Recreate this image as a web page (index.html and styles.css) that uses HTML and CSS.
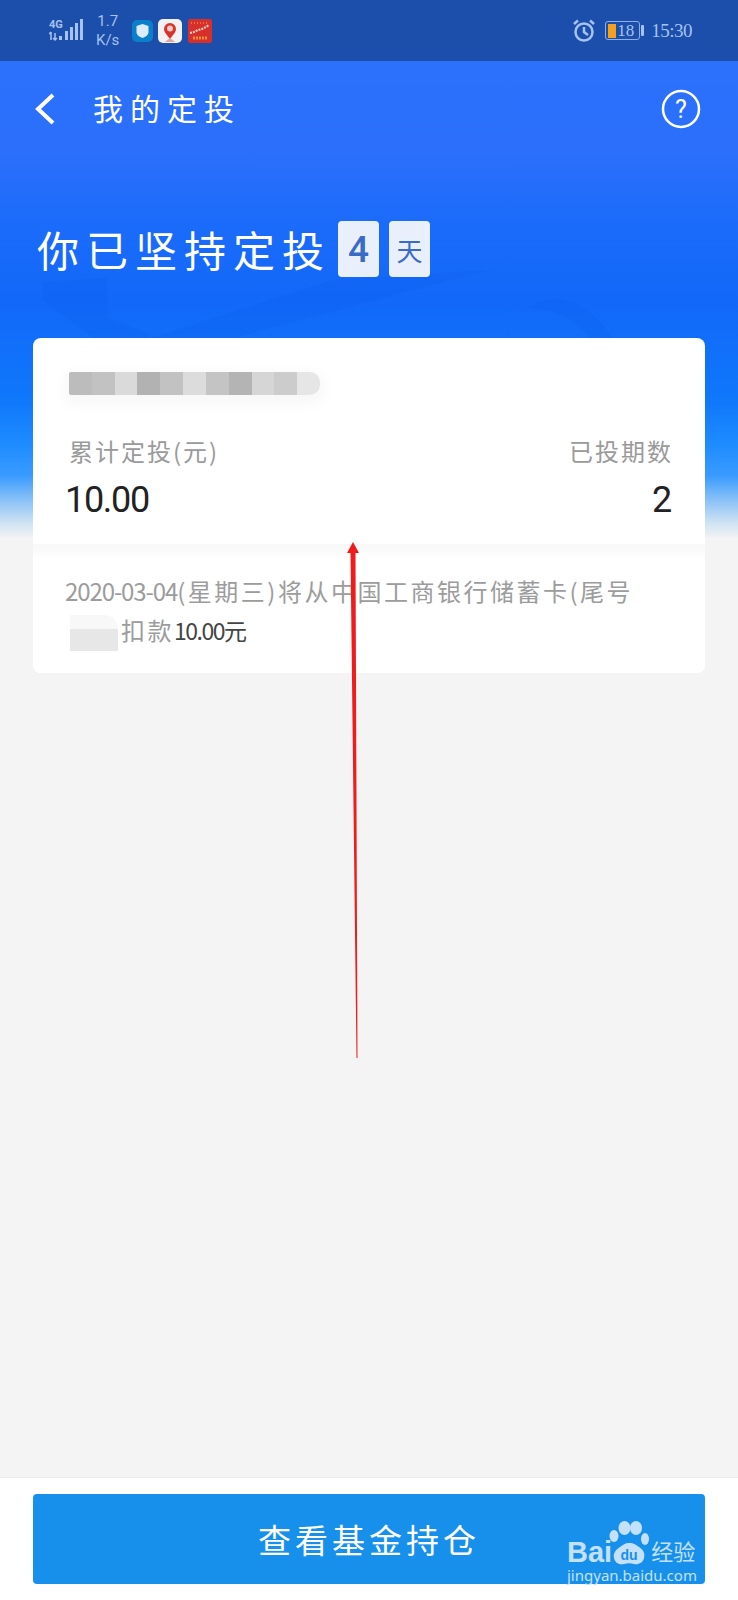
FILE: index.html
```html
<!DOCTYPE html>
<html lang="zh-CN">
<head>
  <meta charset="UTF-8" />
  <meta name="viewport" content="width=device-width, initial-scale=1.0" />
  <title>我的定投</title>
  <link rel="stylesheet" href="styles.css">
</head>
<body>
  <div class="statusbar">
    <div class="status-left">
      <svg class="signal" width="36" height="24" viewBox="0 0 36 24">
        <text x="0" y="10" class="signal-text">4G</text>
        <path d="M2 14v8M0 16l2-2M6 15v7M4 20l2 2 2-2" class="signal-arrows" />
        <rect x="10" y="18" width="3" height="4" />
        <rect x="16" y="13" width="3" height="9" />
        <rect x="21" y="9" width="3" height="13" />
        <rect x="26" y="5" width="3" height="17" />
        <rect x="31" y="1" width="3" height="21" />
      </svg>
      <div class="speed"><span>1.7</span><span>K/s</span></div>
      <svg class="app-icon shield" width="21" height="22" viewBox="0 0 21 22">
        <rect width="21" height="22" rx="5" fill="#0b7fc9" />
        <path d="M10.500 4l6 2v6c0 3-3 5-6 6-3-1-6-3-6-6V6z" fill="#dcecf8" />
      </svg>
      <svg class="app-icon" width="24" height="24" viewBox="0 0 24 24">
        <rect width="24" height="24" rx="5" fill="#f3f1f1" />
        <path d="M12 20c-3-4-6-7-6-10a6 6 0 0 1 12 0c0 3-3 6-6 10z" fill="#d9332f" />
        <circle cx="12" cy="9.500" r="3" fill="#f6c9c6" />
        <path d="M7 23l5-4 5 4z" fill="#e3a3a0" />
      </svg>
      <svg class="app-icon" width="24" height="24" viewBox="0 0 24 24">
        <rect width="24" height="24" rx="2" fill="#d62f2c" />
        <path d="M2 14l4-1 4-2 4-1 4-2 3-2" stroke="#f4d9c8" stroke-width="2" fill="none" stroke-dasharray="2 1" />
        <path d="M5 19h14" stroke="#e8913a" stroke-width="3" stroke-dasharray="2 1" />
        <path d="M3 4h18" stroke="#e8723a" stroke-width="2" stroke-dasharray="1 2" />
      </svg>
    </div>
    <div class="status-right">
      <svg width="22" height="23" viewBox="0 0 22 23" class="alarm">
        <circle cx="11" cy="13" r="8.500" />
        <path d="M11 8v5l4 3M1 5l4-3.500M21 5l-4-3.500" />
      </svg>
      <div class="battery">
        <div class="battery-body"><i class="battery-fill"></i><span>18</span></div>
        <i class="battery-cap"></i>
      </div>
      <span class="clock">15:30</span>
    </div>
  </div>

  <main class="hero">
    <svg class="hero-bg" width="738" height="139" viewBox="0 0 738 139">
      <path d="M43 82l64-4 1 40 42 16-3 5H95L43 100z" />
      <path d="M147 139l186-59 156-10-259 69z" />
      <path d="M527 108c20-16 60-14 85 31h-22c-14-22-40-31-63-31z" />
    </svg>

    <nav class="nav">
      <svg class="back" width="22" height="32" viewBox="0 0 22 32">
        <path d="M19 2L4 16l15 14" />
      </svg>
      <h1 class="nav-title">我的定投</h1>
      <svg class="help" width="40" height="40" viewBox="0 0 40 40">
        <circle cx="20" cy="20" r="18" />
        <text x="20" y="29" text-anchor="middle">?</text>
      </svg>
    </nav>

    <div class="streak">
      <h2 class="streak-text">你已坚持定投</h2>
      <span class="tile tile-num">4</span>
      <span class="tile tile-unit">天</span>
    </div>

    <section class="card">
      <div class="card-top">
        <div class="blur-name">
          <i class="g1"></i><i class="g2"></i><i class="g3"></i><i class="g4"></i><i class="g2"></i><i class="g5"></i><i class="g6"></i><i class="g7"></i><i class="g8"></i><i class="g9"></i><i class="g10"></i>
        </div>
        <div class="stats">
          <div class="stat">
            <div class="stat-label">累计定投(元)</div>
            <div class="stat-value first">10.00</div>
          </div>
          <div class="stat stat-right">
            <div class="stat-label">已投期数</div>
            <div class="stat-value">2</div>
          </div>
        </div>
      </div>
      <p class="notice"><span class="date">2020-03-04</span>(星期三)将从中国工商银行储蓄卡(尾号 <span class="blur-tail"></span>扣款<span class="amount">10.00元</span></p>
    </section>
  </main>

  <footer class="footer">
    <button class="btn" type="button">
      查看基金持仓
      <span class="watermark">
        <span class="wm-top">
          <span class="wm-bai">Bai</span>
          <svg class="wm-paw" width="40" height="45" viewBox="0 0 40 45">
            <ellipse cx="5" cy="15" rx="4.500" ry="6" />
            <ellipse cx="15.500" cy="7" rx="6" ry="7" />
            <ellipse cx="27" cy="7" rx="6" ry="7" />
            <ellipse cx="36" cy="18" rx="4" ry="6" />
            <path d="M20 22c5 0 7 2 10 4 5 3 6 7 5 11-1 5-6 7-10 6-3-1-7-1-10 0-5 1-9-1-10-6-1-4 1-8 6-11 3-2 5-4 9-4z" />
            <text x="20" y="39" text-anchor="middle">du</text>
          </svg>
          <span class="wm-jy">经验</span>
        </span>
        <span class="wm-url">jingyan.baidu.com</span>
      </span>
    </button>
  </footer>

  <svg class="arrow" width="20" height="520" viewBox="0 0 20 520">
    <path d="M8 2l6 11h-3.500L12.500 518h-1L5.500 13H2z" />
  </svg>
</body>
</html>
```

FILE: styles.css
```css
* {
  box-sizing: border-box;
}

body {
  margin: 0;
  height: 1600px;
  display: flex;
  flex-direction: column;
  font-family: "Noto Sans CJK SC", "Noto Sans", sans-serif;
  background: #f4f4f4;
  overflow: hidden;
}

/* status bar */
.statusbar {
  height: 61px;
  flex: none;
  display: flex;
  justify-content: space-between;
  align-items: center;
  padding: 0 46px 0 49px;
  background: #1c4eab;
  color: #a6c2ee;
}
.status-left,
.status-right {
  display: flex;
  align-items: center;
}
.signal {
  fill: #a6c2ee;
  margin-top: -2px;
}
.signal-text {
  font: bold 11px "Roboto", sans-serif;
}
.signal-arrows {
  stroke: #a6c2ee;
  stroke-width: 1.500;
  fill: none;
}
.speed {
  display: flex;
  flex-direction: column;
  align-items: center;
  margin-left: 11px;
  font: 15px/19px "Roboto", sans-serif;
}
.app-icon {
  margin-left: 6px;
}
.shield {
  margin-left: 13px;
  margin-right: -1px;
}
.alarm {
  fill: none;
  stroke: #a6c2ee;
  stroke-width: 2.500;
  margin-right: 10px;
}
.battery {
  display: flex;
  align-items: center;
  margin-right: 7px;
}
.battery-body {
  width: 35px;
  height: 19px;
  display: flex;
  align-items: center;
  padding-left: 2px;
  border: 1px solid #8eaee4;
  border-radius: 3px;
  font: 17px/17px "Liberation Serif", serif;
}
.battery-fill {
  width: 8px;
  height: 14px;
  margin-right: 1px;
  background: #f5a01f;
}
.battery-cap {
  width: 3px;
  height: 11px;
  margin-left: 1px;
  border-radius: 1px;
  background: #a6c2ee;
}
.clock {
  font: 19px/24px "Liberation Serif", serif;
  letter-spacing: -0.500px;
}

/* blue top of the page */
.hero {
  flex: 1;
  position: relative;
  background: linear-gradient(#2b71fc 0, #2b6ffb 90px, #1a6bfa 170px, #1268f9 240px, #0f78fb 340px, #1f8cff 385px, #3a9bff 415px, #7fbdf8 436px, #cfe3f2 462px, #f4f4f4 478px);
}
.hero-bg {
  position: absolute;
  left: 0;
  top: 139px;
  fill: #0b5cec;
  opacity: 0.18;
}
.nav {
  position: relative;
  height: 96px;
  display: flex;
  align-items: center;
  padding: 0 37px 0 34px;
}
.back {
  fill: none;
  stroke: #fff;
  stroke-width: 4;
}
.nav-title {
  margin: 0 0 4px 37px;
  font-size: 30px;
  font-weight: 400;
  line-height: 40px;
  letter-spacing: 7px;
  color: #fff;
}
.help {
  margin-left: auto;
  fill: none;
  stroke: #fff;
  stroke-width: 2.500;
}
.help text {
  fill: #fff;
  stroke: none;
  font: 25px "Roboto", sans-serif;
}

.streak {
  position: relative;
  height: 56px;
  display: flex;
  align-items: center;
  margin-top: 64px;
  padding-left: 37px;
}
.streak-text {
  margin: 0 7px 0 0;
  font-size: 42px;
  font-weight: 400;
  line-height: 56px;
  letter-spacing: 7px;
  color: #fff;
}
.tile {
  width: 41px;
  height: 56px;
  display: flex;
  align-items: center;
  justify-content: center;
  border-radius: 4px;
  background: #e9f0fb;
  color: #3a6cc6;
}
.tile-num {
  font: 500 37px "Roboto", sans-serif;
}
.tile-unit {
  margin-left: 10px;
  font-size: 26px;
}

/* card */
.card {
  position: relative;
  margin: 61px 33px 0;
  border-radius: 8px;
  background: #fff;
}
.card-top {
  height: 206px;
  padding: 34px 34px 0 36px;
}
.blur-name {
  display: flex;
  width: 251px;
  height: 23px;
  border-radius: 2px 10px 10px 2px;
  box-shadow: 0 5px 14px 5px #f8f8f8;
  overflow: hidden;
}
.blur-name i {
  flex: 1;
}
.g1 { background: #bcbcbc; }
.g2 { background: #c2c2c2; }
.g3 { background: #dadada; }
.g4 { background: #b2b2b2; }
.g5 { background: #dcdcdc; }
.g6 { background: #c4c4c4; }
.g7 { background: #b4b4b4; }
.g8 { background: #d6d6d6; }
.g9 { background: #cccccc; }
.g10 { background: #e6e6e6; }

.stats {
  display: flex;
  justify-content: space-between;
  margin-top: 41px;
}
.stat-right {
  text-align: right;
}
.stat-label {
  font-size: 24px;
  line-height: 30px;
  letter-spacing: 2px;
  color: #9a9a9a;
}
.stat-right .stat-label {
  margin-right: -2px;
}
.stat-value {
  margin-top: 12px;
  font: 400 36px/44px "Roboto", sans-serif;
  letter-spacing: -1.300px;
  color: #222;
}
.stat-value.first {
  margin-left: -4px;
}
.notice {
  margin: 0;
  height: 129px;
  padding: 27px 40px 0 32px;
  border-radius: 0 0 8px 8px;
  background: linear-gradient(#f8f8f8, #fff 16px);
  font-size: 24px;
  line-height: 39px;
  letter-spacing: 2.500px;
  color: #9c9c9c;
}
.date {
  letter-spacing: -1.100px;
}
.blur-tail {
  display: inline-block;
  vertical-align: middle;
  width: 48px;
  height: 36px;
  margin: 0 3px 0 5px;
  border-radius: 0 14px 0 0;
  background: linear-gradient(#f8f8f8 40%, #e7e7e7 40%);
}
.amount {
  font-size: 23px;
  letter-spacing: -1.500px;
  color: #444;
}

/* footer button */
.footer {
  flex: none;
  height: 123px;
  padding: 16px 33px 0;
  border-top: 1px solid #ececec;
  background: #fff;
}
.btn {
  position: relative;
  display: block;
  width: 100%;
  height: 90px;
  padding: 0;
  border: none;
  border-radius: 4px;
  background: #1790ec;
  font-family: inherit;
  font-size: 33px;
  letter-spacing: 4px;
  color: #fff;
}
.watermark {
  position: absolute;
  left: 534px;
  top: 27px;
  width: 135px;
  letter-spacing: 0;
  color: #c5e1fa;
}
.wm-top {
  display: flex;
  align-items: flex-end;
  height: 45px;
}
.wm-bai {
  font: bold 29px/27px "Liberation Sans", sans-serif;
  margin-right: -3px;
}
.wm-paw {
  flex: none;
  fill: #c5e1fa;
}
.wm-paw text {
  fill: #1790ec;
  font: bold 14px "Liberation Sans", sans-serif;
}
.wm-jy {
  font-size: 22px;
  line-height: 28px;
  margin: 0 0 2px 2px;
}
.wm-url {
  display: block;
  font: 15px/18px "Noto Sans", sans-serif;
  text-align: left;
  white-space: nowrap;
}

/* red annotation arrow drawn on top of the screenshot */
.arrow {
  position: absolute;
  left: 345px;
  top: 540px;
  fill: #f01c1c;
}
```
